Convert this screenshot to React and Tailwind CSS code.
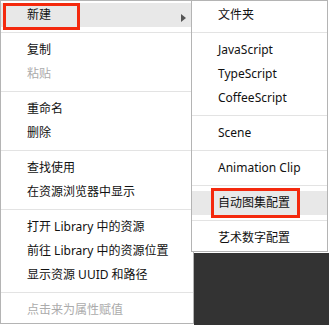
const MAIN = [
  [{ label: '新建', sub: true, active: true }],
  [{ label: '复制' }, { label: '粘贴', disabled: true }],
  [{ label: '重命名' }, { label: '删除' }],
  [{ label: '查找使用' }, { label: '在资源浏览器中显示' }],
  [{ label: '打开 Library 中的资源' }, { label: '前往 Library 中的资源位置' }, { label: '显示资源 UUID 和路径' }],
  [{ label: '点击来为属性赋值', disabled: true }],
];

const SUB = [
  [{ label: '文件夹' }],
  [{ label: 'JavaScript' }, { label: 'TypeScript' }, { label: 'CoffeeScript' }],
  [{ label: 'Scene' }],
  [{ label: 'Animation Clip' }],
  [{ label: '自动图集配置', active: true }],
  [{ label: '艺术数字配置' }],
];

function Item({ item }) {
  return (
    <div
      className={`relative h-[24px] flex items-center pl-[26px] pr-2 whitespace-nowrap ${
        item.active ? 'bg-[#e8e8e8]' : ''
      } ${item.disabled ? 'text-[#ababab]' : 'text-[#111]'}`}
    >
      {item.label}
      {item.sub && (
        <span className="absolute right-[7px] top-[11px] w-0 h-0 border-y-[4px] border-y-transparent border-l-[5px] border-l-[#555]" />
      )}
    </div>
  );
}

function Menu({ groups, className }) {
  return (
    <div className={`bg-white border border-[#b4b4b4] pt-[2px] pb-[1px] ${className}`}>
      {groups.map((g, i) => (
        <div key={i}>
          {i > 0 && <div className="h-px bg-[#e3e3e3] my-[5px]" />}
          {g.map((item) => (
            <Item key={item.label} item={item} />
          ))}
        </div>
      ))}
    </div>
  );
}

export default function App() {
  return (
    <div
      className="relative w-[329px] h-[325px] bg-white flex overflow-hidden text-[12px] leading-none"
      style={{ fontFamily: '"Noto Sans", "Noto Sans CJK SC", sans-serif' }}
    >
      <Menu groups={MAIN} className="w-[194px] h-[324px] shrink-0" />
      <div className="flex-1 flex flex-col">
        <Menu groups={SUB} className="relative z-10 -ml-[3px] w-[137px] h-[252px]" />
        <div className="flex-1 bg-[#333333] mt-[1px]" />
      </div>
      {/* annotation boxes */}
      <div className="absolute left-[3px] top-[3px] w-[77px] h-[27px] border-[3px] border-[#f4290d] z-20" />
      <div className="absolute left-[211px] top-[188px] w-[89px] h-[30px] border-[3px] border-[#f4290d] z-20" />
    </div>
  );
}
